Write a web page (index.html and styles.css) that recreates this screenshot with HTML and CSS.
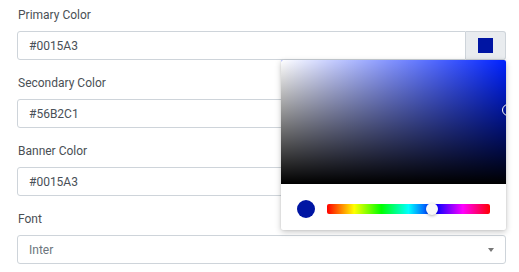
FILE: index.html
```html
<!DOCTYPE html>
<html lang="en">
<head>
<meta charset="utf-8">
<title>Theme colors</title>
<link rel="stylesheet" href="styles.css">
</head>
<body>
<div class="form">
  <div class="group">
    <label class="label">Primary Color</label>
    <div class="input-group">
      <input class="input input-left" type="text" value="#0015A3" readonly>
      <div class="addon"><span class="swatch"></span></div>
      <div class="picker">
        <div class="saturation">
          <div class="sat-white"></div>
          <div class="sat-black"></div>
          <div class="sat-thumb"></div>
        </div>
        <div class="picker-controls">
          <span class="preview"></span>
          <div class="hue">
            <span class="hue-thumb"></span>
          </div>
        </div>
      </div>
    </div>
  </div>
  <div class="group">
    <label class="label">Secondary Color</label>
    <input class="input" type="text" value="#56B2C1" readonly>
  </div>
  <div class="group">
    <label class="label">Banner Color</label>
    <input class="input" type="text" value="#0015A3" readonly>
  </div>
  <div class="group">
    <label class="label">Font</label>
    <div class="select">
      <span class="select-value">Inter</span>
      <span class="select-arrow"></span>
    </div>
  </div>
</div>
</body>
</html>
```
FILE: styles.css
```css
* { box-sizing: border-box; }
html, body { margin: 0; padding: 0; background: #fff; }
body {
  font-family: Roboto, "Liberation Sans", sans-serif;
  font-size: 12px;
  color: #495057;
}
.form {
  width: 489px;
  margin-left: 17px;
  padding-top: 6px;
}
.group { margin-bottom: 14px; }
.label {
  display: block;
  line-height: 18px;
  margin: 0 0 7px 1px;
  color: #4a4f55;
}
.input-group {
  position: relative;
  display: flex;
}
.input {
  display: block;
  width: 100%;
  height: 29px;
  margin: 0;
  padding: 0 11px;
  border: 1px solid #ced4da;
  border-radius: 3px;
  background: #fff;
  font-family: inherit;
  font-size: 12px;
  color: #495057;
  outline: none;
}
.input-left {
  flex: 1;
  border-radius: 3px 0 0 3px;
}
.addon {
  flex: 0 0 40px;
  height: 29px;
  display: flex;
  align-items: center;
  justify-content: center;
  background: #e9ecef;
  border: 1px solid #ced4da;
  border-left: 0;
  border-radius: 0 3px 3px 0;
}
.swatch {
  width: 15px;
  height: 15px;
  background: #0015A3;
}
.picker {
  position: absolute;
  top: 100%;
  right: 0;
  width: 225px;
  background: #fff;
  border-radius: 2px;
  box-shadow: 0 2px 6px rgba(0, 0, 0, 0.22), 0 0 2px rgba(0, 0, 0, 0.12);
  z-index: 10;
}
.saturation {
  position: relative;
  height: 124px;
  overflow: hidden;
  background: hsl(232, 100%, 50%);
  border-radius: 2px 2px 0 0;
}
.sat-white, .sat-black {
  position: absolute;
  inset: 0;
}
.sat-white { background: linear-gradient(to right, #fff, rgba(255, 255, 255, 0)); }
.sat-black { background: linear-gradient(to top, #000, rgba(0, 0, 0, 0)); }
.sat-thumb {
  position: absolute;
  left: 100%;
  top: 50px;
  width: 12px;
  height: 12px;
  margin: -6px 0 0 -4px;
  border: 1.5px solid #fff;
  border-radius: 50%;
  box-shadow: 0 0 1px rgba(0, 0, 0, 0.4);
}
.picker-controls {
  display: flex;
  align-items: center;
  padding: 16px 16px 12px;
  gap: 12px;
}
.preview {
  flex: 0 0 18px;
  height: 18px;
  border-radius: 50%;
  background: #0015A3;
}
.hue {
  position: relative;
  flex: 1;
  height: 10px;
  border-radius: 2px;
  background: linear-gradient(to right, #f00 0%, #ff0 16.66%, #0f0 33.33%, #0ff 50%, #00f 66.66%, #f0f 83.33%, #f00 100%);
}
.hue-thumb {
  position: absolute;
  left: 64.5%;
  top: 50%;
  width: 12px;
  height: 12px;
  margin: -6px 0 0 -6px;
  border-radius: 50%;
  background: #f8f8f8;
  box-shadow: 0 1px 3px rgba(0, 0, 0, 0.3);
}
.select {
  display: flex;
  align-items: center;
  justify-content: space-between;
  height: 29px;
  padding: 0 11px 0 11px;
  border: 1px solid #ced4da;
  border-radius: 3px;
  background: #fff;
}
.select-value { color: #6c757d; }
.select-arrow {
  width: 0;
  height: 0;
  border-left: 3px solid transparent;
  border-right: 3px solid transparent;
  border-top: 4px solid #777;
  margin-top: 1px;
}
```
